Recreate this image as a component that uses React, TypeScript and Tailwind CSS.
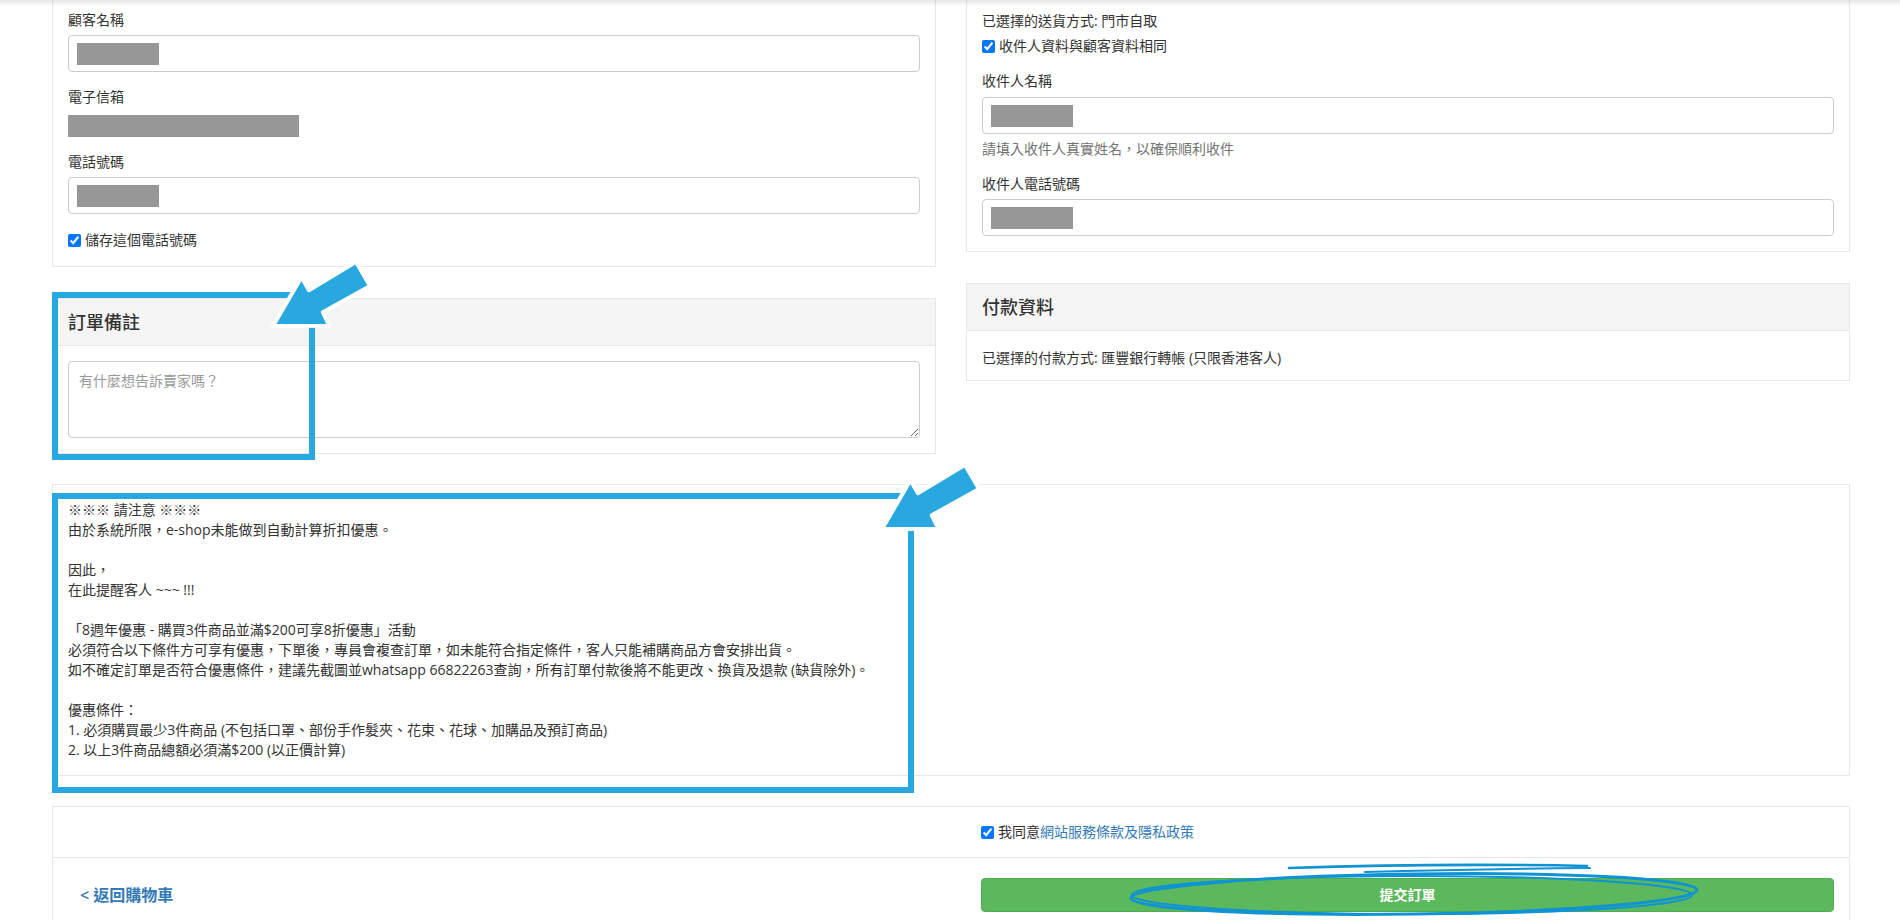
import type { ReactNode } from "react";

const InputBox = ({ className = "" }: { className?: string }) => (
  <div className={`flex h-[37px] items-center rounded-[4px] border border-[#cccccc] px-[8px] ${className}`}>
    <div className="h-[22px] w-[82px] bg-[#979797]" />
  </div>
);

const Check = ({ children, className = "" }: { children: ReactNode; className?: string }) => (
  <label className={`flex items-center gap-[4px] ${className}`}>
    <input type="checkbox" defaultChecked className="m-0 h-[13px] w-[13px]" />
    <span>{children}</span>
  </label>
);

const PanelHeading = ({ title }: { title: string }) => (
  <div className="flex h-[47px] items-center border-b border-[#e7e7e7] bg-[#f5f5f5] px-[15px] text-[18px] font-medium text-[#333]">
    {title}
  </div>
);

const notice = [
  "※※※ 請注意 ※※※",
  "由於系統所限，e-shop未能做到自動計算折扣優惠。",
  "",
  "因此，",
  "在此提醒客人 ~~~ !!!",
  "",
  "「8週年優惠 - 購買3件商品並滿$200可享8折優惠」活動",
  "必須符合以下條件方可享有優惠，下單後，專員會複查訂單，如未能符合指定條件，客人只能補購商品方會安排出貨。",
  "如不確定訂單是否符合優惠條件，建議先截圖並whatsapp 66822263查詢，所有訂單付款後將不能更改、換貨及退款 (缺貨除外)。",
  "",
  "優惠條件：",
  "1. 必須購買最少3件商品 (不包括口罩、部份手作髮夾、花束、花球、加購品及預訂商品)",
  "2. 以上3件商品總額必須滿$200 (以正價計算)",
];

// fat annotation arrow, tip at (x, y), body pointing along angle
const Arrow = ({ x, y, angle }: { x: number; y: number; angle: number }) => (
  <polygon
    points="0,0 49,-28 49,-13 104,-14 104,14 50,13 49,28"
    transform={`translate(${x} ${y}) rotate(${angle})`}
    fill="#29a8e0"
    stroke="#ffffff"
    strokeWidth="4"
    strokeLinejoin="round"
  />
);

export default function App() {
  return (
    <div className="relative h-[920px] overflow-hidden bg-white text-[14px] leading-[20px] text-[#333] [font-family:'Open_Sans','Noto_Sans_CJK_TC',sans-serif]">
      <div className="pl-[52px] pr-[50px]">
        <div className="grid grid-cols-2 items-start gap-x-[30px]">
          {/* left column */}
          <div className="flex flex-col">
            <div className="border border-t-0 border-[#e7e7e7] px-[15px] pt-[10px] pb-[16px]">
              <div>顧客名稱</div>
              <InputBox className="mt-[5px]" />
              <div className="mt-[15px]">電子信箱</div>
              <div className="mt-[8px] h-[22px] w-[231px] bg-[#979797]" />
              <div className="mt-[15px]">電話號碼</div>
              <InputBox className="mt-[5px]" />
              <Check className="mt-[16px]">儲存這個電話號碼</Check>
            </div>

            <div className="mt-[31px] border border-[#e7e7e7]">
              <PanelHeading title="訂單備註" />
              <div className="px-[15px] pt-[15px] pb-[15px]">
                <textarea
                  placeholder="有什麼想告訴賣家嗎？"
                  className="block h-[77px] w-full rounded-[4px] border border-[#cccccc] px-[10px] py-[9px] text-[14px] leading-[20px] outline-none placeholder:text-[#999]"
                />
              </div>
            </div>
          </div>

          {/* right column */}
          <div className="flex flex-col">
            <div className="border border-t-0 border-[#e7e7e7] px-[15px] pt-[11px] pb-[15px]">
              <div>已選擇的送貨方式: 門市自取</div>
              <Check className="mt-[5px]">收件人資料與顧客資料相同</Check>
              <div className="mt-[15px]">收件人名稱</div>
              <InputBox className="mt-[6px]" />
              <div className="mt-[5px] text-[#737373]">請填入收件人真實姓名，以確保順利收件</div>
              <div className="mt-[15px]">收件人電話號碼</div>
              <InputBox className="mt-[5px]" />
            </div>

            <div className="mt-[31px] border border-[#e7e7e7]">
              <PanelHeading title="付款資料" />
              <div className="px-[15px] pt-[17px] pb-[12px]">已選擇的付款方式: 匯豐銀行轉帳 (只限香港客人)</div>
            </div>
          </div>
        </div>

        {/* notice */}
        <div className="mt-[30px] border border-[#e7e7e7] px-[15px] pt-[15px] pb-[15px]">
          {notice.map((line, i) => (
            <div key={i} className="h-[20px] whitespace-nowrap">
              {line}
            </div>
          ))}
        </div>

        {/* submit */}
        <div className="mt-[30px] border border-[#e7e7e7]">
          <div className="grid grid-cols-2 gap-x-[30px] border-b border-[#e7e7e7] py-[15px]">
            <div />
            <div className="px-[15px]">
              <Check>
                我同意<span className="text-[#337ab7]">網站服務條款及隱私政策</span>
              </Check>
            </div>
          </div>
          <div className="grid grid-cols-2 gap-x-[30px] pt-[20px] pb-[20px]">
            <div className="flex items-center px-[15px]">
              <span className="px-[12px] text-[16px] font-semibold text-[#337ab7]">&lt; 返回購物車</span>
            </div>
            <div className="px-[15px]">
              <button className="flex h-[34px] w-full items-center justify-center rounded-[4px] border border-[#4cae4c] bg-[#5cb85c] text-[14px] font-bold text-white">
                提交訂單
              </button>
            </div>
          </div>
        </div>
      </div>

      {/* header shadow */}
      <div className="pointer-events-none absolute inset-x-0 top-0 h-[6px] bg-gradient-to-b from-black/10 to-transparent" />

      {/* annotations */}
      <div className="pointer-events-none absolute left-[52px] top-[292px] h-[168px] w-[263px] border-[6px] border-[#29a8e0]" />
      <div className="pointer-events-none absolute left-[52px] top-[493px] h-[300px] w-[862px] border-[6px] border-[#29a8e0]" />
      <svg className="pointer-events-none absolute left-0 top-0" width="1900" height="920" viewBox="0 0 1900 920">
        <Arrow x={273} y={326} angle={-30} />
        <Arrow x={882} y={529} angle={-30} />
        <ellipse cx="1414" cy="894" rx="283" ry="20" fill="none" stroke="#0f93d3" strokeWidth="3" transform="rotate(-0.8 1414 894)" />
        <ellipse cx="1412" cy="895" rx="280" ry="19" fill="none" stroke="#0f93d3" strokeWidth="2" />
        <path d="M1289 868 Q1440 863 1587 866" fill="none" stroke="#0f93d3" strokeWidth="2.5" strokeLinecap="round" />
        <path d="M1365 872 Q1470 869 1590 868" fill="none" stroke="#0f93d3" strokeWidth="2" strokeLinecap="round" />
      </svg>
    </div>
  );
}
